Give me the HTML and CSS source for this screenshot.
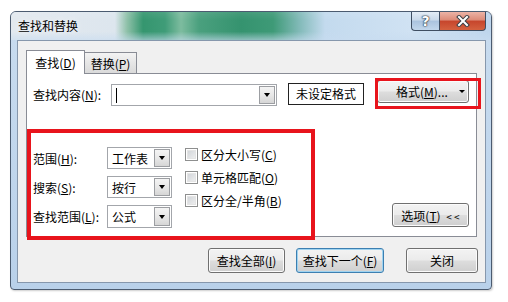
FILE: index.html
```html
<!DOCTYPE html>
<html lang="zh-CN">
<head>
	<meta charset="utf-8">
	<title>查找和替换</title>
	<link rel="stylesheet" href="styles.css">
</head>
<body>

<div class="window">
	<div class="titlebar">
		<span class="title">查找和替换</span>
		<div class="caption">
			<span class="cap cap-help">?</span>
			<span class="cap cap-close">
				<svg width="14" height="12" viewBox="0 0 14 12">
					<path d="M3 2 L11 10 M11 2 L3 10" stroke="#3b3f45" stroke-width="4" stroke-linecap="square"/>
					<path d="M3 2 L11 10 M11 2 L3 10" stroke="#fff" stroke-width="2" stroke-linecap="square"/>
				</svg>
			</span>
		</div>
	</div>

	<div class="client">
		<div class="tabs">
			<span class="tab tab-active">查找(<u>D</u>)</span>
			<span class="tab">替换(<u>P</u>)</span>
		</div>

		<div class="panel">
			<div class="find-row">
				<label class="find-label">查找内容(<u>N</u>):</label>
				<div class="combo find-combo">
					<span class="field"><span class="caret"></span></span>
					<span class="drop"><span class="tri"></span></span>
				</div>
				<div class="fmt-preview">未设定格式</div>
				<button class="btn fmt-btn">格式(<u>M</u>)... <span class="tri"></span></button>
			</div>

			<div class="options">
				<div class="opt-grid">
					<label>范围(<u>H</u>):</label>
					<div class="combo"><span class="field">工作表</span><span class="drop"><span class="tri"></span></span></div>
					<label>搜索(<u>S</u>):</label>
					<div class="combo"><span class="field">按行</span><span class="drop"><span class="tri"></span></span></div>
					<label>查找范围(<u>L</u>):</label>
					<div class="combo combo-tall"><span class="field">公式</span><span class="drop"><span class="tri"></span></span></div>
				</div>
				<div class="checks">
					<div class="check"><span class="box"></span>区分大小写(<u>C</u>)</div>
					<div class="check"><span class="box"></span>单元格匹配(<u>O</u>)</div>
					<div class="check"><span class="box"></span>区分全/半角(<u>B</u>)</div>
				</div>
				<button class="btn opt-btn">选项(<u>T</u>) <span class="arrows">&lt; &lt;</span></button>
			</div>
		</div>

		<div class="actions">
			<button class="btn btn-all">查找全部(<u>I</u>)</button>
			<button class="btn btn-next">查找下一个(<u>F</u>)</button>
			<button class="btn btn-close">关闭</button>
		</div>
	</div>

	<div class="mark mark-fmt"></div>
	<div class="mark mark-opts"></div>
</div>

</body>
</html>
```

FILE: styles.css
```css
* {box-sizing: border-box;}
html, body {margin: 0;}
body {
	width: 508px;
	height: 302px;
	padding: 11px 0 0 10px;
	background: #fff;
	font-family: "Noto Sans CJK SC", "Microsoft YaHei", sans-serif;
	font-size: 12px;
	color: #000;
	overflow: hidden;
}
u {text-underline-offset: 1px;}

/* window frame */
.window {
	position: relative;
	width: 482px;
	height: 279px;
	display: flex;
	flex-direction: column;
	border: 1px solid #4b5b70;
	border-radius: 6px 6px 4px 4px;
	background: linear-gradient(180deg, #c9dcef, #b9d1ea);
	box-shadow: 1px 1px 2px rgba(0, 0, 0, 0.2);
}
.titlebar {
	height: 28px;
	display: flex;
	align-items: flex-start;
	padding-left: 7px;
	border-radius: 5px 5px 0 0;
	background:
		linear-gradient(180deg, rgba(255, 255, 255, 0.08), rgba(255, 255, 255, 0) 30%, rgba(255, 255, 255, 0) 70%, rgba(200, 220, 240, 0.6) 100%),
		linear-gradient(90deg, #e3e9ef 0, #dde6ee 104px, #8fc1a9 116px, #35966f 132px, #3f9c78 154px,
			#7dbc9f 170px, #4aa07e 188px, #35936f 230px, #3e9a77 262px, #86bcbc 290px, #c3daee 314px,
			#d0e2f3 400px, #bed5ec 480px);
}
.title {
	line-height: 28px;
	text-shadow: 0 0 6px rgba(255, 255, 255, 0.9);
}
.caption {
	display: flex;
	margin-left: auto;
	margin-right: 5px;
}
.cap {
	height: 19px;
	display: flex;
	align-items: center;
	justify-content: center;
	border: 1px solid #3f4e62;
	border-top: none;
}
.cap-help {
	width: 28px;
	border-right: none;
	border-radius: 0 0 0 4px;
	background: linear-gradient(180deg, #e4edf6, #c9d9ea 45%, #aac3de 50%, #c2d7ec);
	color: #fff;
	font: bold 14px "DejaVu Sans", sans-serif;
	text-shadow: 0 0 1px #22303f, 0 0 1px #22303f, 0 0 2px #22303f;
}
.cap-close {
	width: 47px;
	border-radius: 0 0 4px 0;
	background: linear-gradient(180deg, #ebb3a6, #dc8a77 45%, #c6452c 50%, #d4613f);
}

/* client area */
.client {
	flex: 1;
	margin: 0 5px 6px 6px;
	border: 1px solid #8697ac;
	background: #f0f0f0;
	padding: 9px 7px 0 8px;
}
.tabs {
	display: flex;
	align-items: flex-end;
	height: 23px;
}
.tab {
	height: 21px;
	width: 52px;
	display: flex;
	align-items: center;
	justify-content: center;
	border: 1px solid #898c95;
	border-bottom: none;
	border-left: none;
	background: linear-gradient(180deg, #f3f3f3, #e6e6e6 50%, #dadada);
}
.tab-active {
	position: relative;
	z-index: 1;
	width: 59px;
	height: 24px;
	margin-bottom: -1px;
	padding-bottom: 1px;
	border-left: 1px solid #898c95;
	background: #fff;
}
.panel {
	width: 451px;
	height: 164px;
	border: 1px solid #898c95;
	background: #fff;
	padding: 6px 7px 0 6px;
}

.find-row {
	display: flex;
	align-items: flex-start;
}
.find-label {
	width: 78px;
	line-height: 22px;
	margin-top: 4px;
}
.combo {
	display: flex;
	width: 65px;
	height: 22px;
	border: 1px solid #a3a6ab;
	background: #fff;
}
.combo-tall {height: 23px;}
.find-combo {
	width: 166px;
	margin-top: 4px;
}
.field {
	flex: 1;
	display: flex;
	align-items: center;
	padding-left: 4px;
}
.caret {
	width: 1px;
	height: 15px;
	background: #000;
}
.drop {
	width: 16px;
	margin: 1px;
	display: flex;
	align-items: center;
	justify-content: center;
	border: 1px solid #9c9ea2;
	background: linear-gradient(180deg, #f4f4f4, #e8e8e8 50%, #d6d6d6);
}
.tri {
	width: 0;
	height: 0;
	border-left: 3.5px solid transparent;
	border-right: 3.5px solid transparent;
	border-top: 4px solid #000;
}
.fmt-preview {
	width: 76px;
	height: 22px;
	margin: 3px 0 0 11px;
	border: 1px solid #222;
	line-height: 20px;
	text-align: center;
}

/* buttons */
.btn {
	font: inherit;
	color: #000;
	height: 25px;
	padding: 0;
	border: 1px solid #707070;
	border-radius: 3px;
	background: linear-gradient(180deg, #f3f3f3, #ebebeb 48%, #dddddd 52%, #cfcfcf);
	box-shadow: inset 0 0 0 1px #fbfbfb;
}
.fmt-btn {
	width: 92px;
	height: 23px;
	margin-left: 13px;
	display: flex;
	align-items: center;
	padding: 0 3px 0 18px;
}
.fmt-btn .tri {
	margin-left: auto;
	border-left-width: 3px;
	border-right-width: 3px;
	border-top-width: 3px;
}

.options {
	display: flex;
	align-items: flex-start;
	margin-top: 41px;
}
.opt-grid {
	display: grid;
	grid-template-columns: 74px 65px;
	grid-template-rows: 22px 22px 23px;
	row-gap: 7px;
	align-items: center;
}
.checks {
	margin: -4px 0 0 13px;
}
.check {
	height: 23px;
	display: flex;
	align-items: center;
}
.box {
	width: 13px;
	height: 13px;
	margin-right: 3px;
	border: 1px solid #8e8f8f;
	background: linear-gradient(135deg, #cbcfd4, #f4f4f4);
	box-shadow: inset 0 0 0 1px #fff, inset 0 0 0 2px #e4e4e4;
}
.opt-btn {
	width: 77px;
	height: 24px;
	margin: 0 0 1px auto;
	align-self: flex-end;
}
.arrows {
	font-size: 10px;
	margin-left: 3px;
}

.actions {
	display: flex;
	justify-content: flex-end;
	margin-top: 11px;
}
.btn-all {width: 77px;}
.btn-next {
	width: 88px;
	margin-left: 11px;
	border-color: #3c7fb1;
	box-shadow: inset 0 0 0 1px #9fd3f0;
}
.btn-close {
	width: 72px;
	margin-left: 22px;
}

/* red annotation boxes drawn over the dialog */
.mark {
	position: absolute;
	border: 3px solid #e8141c;
	pointer-events: none;
}
.mark-fmt {
	left: 364px;
	top: 66px;
	width: 106px;
	height: 31px;
}
.mark-opts {
	left: 16px;
	top: 117px;
	width: 288px;
	height: 111px;
	border-width: 4px;
}
```
